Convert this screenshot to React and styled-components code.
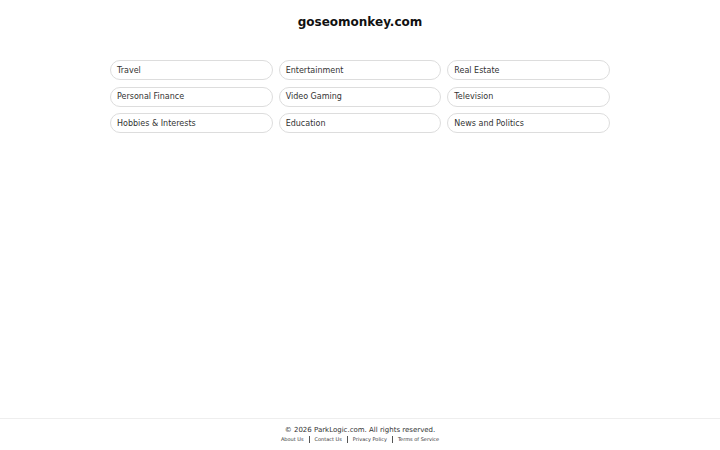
import { Fragment } from "react";
import styled, { createGlobalStyle } from "styled-components";

const GlobalStyle = createGlobalStyle`
  html, body, #root {
    height: 100%;
  }
  body {
    margin: 0;
    font-family: "DejaVu Sans", sans-serif;
    color: #222;
    background: #fff;
  }
`;

const Page = styled.div`
  min-height: 100%;
  display: flex;
  flex-direction: column;
`;

const Main = styled.main`
  flex: 1;
  display: flex;
  flex-direction: column;
  align-items: center;
  padding-top: 14px;
`;

const Title = styled.h1`
  margin: 0;
  font-size: 12px;
  font-weight: 700;
  color: #111;
  line-height: 16px;
`;

const Grid = styled.ul`
  list-style: none;
  margin: 30px 0 0;
  padding: 0;
  width: 500px;
  display: grid;
  grid-template-columns: repeat(3, 1fr);
  gap: 6.5px 6px;
`;

const Pill = styled.a`
  box-sizing: border-box;
  display: flex;
  align-items: center;
  height: 20px;
  padding: 0 6px;
  border: 1px solid #ddd;
  border-radius: 999px;
  font-size: 8px;
  color: #333;
  text-decoration: none;
`;

const Footer = styled.footer`
  border-top: 1px solid #eee;
  padding: 7px 0;
  text-align: center;
`;

const Copy = styled.p`
  margin: 0;
  font-size: 7px;
  color: #333;
  line-height: 9px;
`;

const Links = styled.nav`
  display: flex;
  justify-content: center;
  align-items: center;
  gap: 5px;
  height: 8px;
`;

const FootLink = styled.a`
  font-size: 5px;
  color: #333;
  text-decoration: none;
`;

const Sep = styled.span`
  width: 1px;
  height: 7px;
  background: #555;
`;

const topics = [
  "Travel",
  "Entertainment",
  "Real Estate",
  "Personal Finance",
  "Video Gaming",
  "Television",
  "Hobbies & Interests",
  "Education",
  "News and Politics",
];

const footerLinks = ["About Us", "Contact Us", "Privacy Policy", "Terms of Service"];

export default function App() {
  return (
    <Page>
      <GlobalStyle />
      <Main>
        <Title>goseomonkey.com</Title>
        <Grid>
          {topics.map((t) => (
            <li key={t}>
              <Pill href="#">{t}</Pill>
            </li>
          ))}
        </Grid>
      </Main>
      <Footer>
        <Copy>© 2026 ParkLogic.com. All rights reserved.</Copy>
        <Links>
          {footerLinks.map((l, i) => (
            <Fragment key={l}>
              {i > 0 && <Sep />}
              <FootLink href="#">{l}</FootLink>
            </Fragment>
          ))}
        </Links>
      </Footer>
    </Page>
  );
}
